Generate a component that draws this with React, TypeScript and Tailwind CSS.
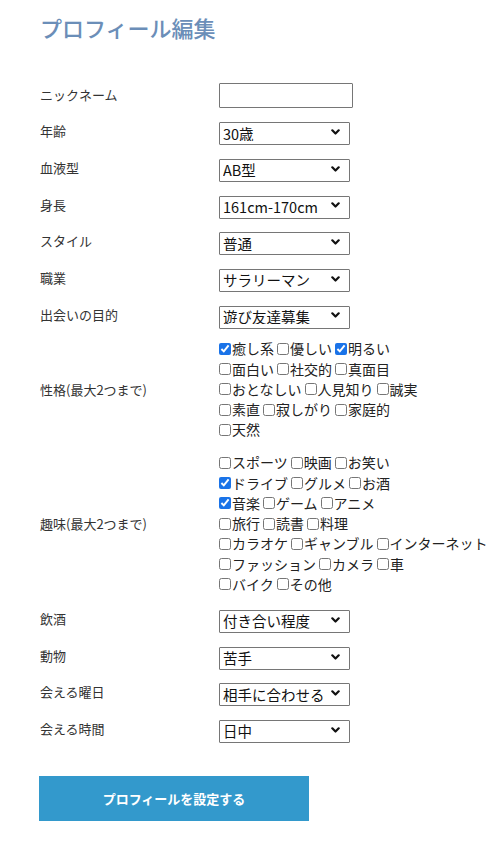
import React from "react";

const font = { fontFamily: '"Noto Sans CJK JP", "Noto Sans", sans-serif' };

function Chevron() {
  return (
    <svg className="pointer-events-none absolute right-[10px] top-1/2 -translate-y-1/2" width="9" height="6" viewBox="0 0 9 6">
      <path d="M1.3 1.3 L4.5 4.5 L7.7 1.3" fill="none" stroke="#111" strokeWidth="2.2" strokeLinecap="round" strokeLinejoin="round" />
    </svg>
  );
}

function Select({ value }: { value: string }) {
  return (
    <div className="relative w-[131px] h-[23px]">
      <select
        defaultValue={value}
        className="appearance-none w-full h-full border border-[#767676] rounded-[1px] bg-white pl-[3px] pr-[18px] text-[14.5px] leading-none text-[#111] outline-none"
        style={font}
      >
        <option value={value}>{value}</option>
      </select>
      <Chevron />
    </div>
  );
}

function Row({ label, children }: { label: string; children: React.ReactNode }) {
  return (
    <div className="grid grid-cols-[179px_1fr] items-center h-[36.7px]">
      <div className="text-[13px] text-[#333] -mt-[2px]">{label}</div>
      <div className="flex items-center">{children}</div>
    </div>
  );
}

type Item = [string, boolean];

function CheckLines({ lines }: { lines: Item[][] }) {
  return (
    <div className="flex flex-col">
      {lines.map((line, i) => (
        <div key={i} className="flex items-center h-[20.25px] text-[14px] text-[#222] whitespace-nowrap">
          {line.map(([t, c], j) => (
            <label key={j} className={"flex items-center " + (j > 0 ? "ml-[3px]" : "")}>
              <input type="checkbox" defaultChecked={c} className="m-0 mr-[1px] w-[12px] h-[12px] accent-[#1a73e8]" />
              <span>{t}</span>
            </label>
          ))}
        </div>
      ))}
    </div>
  );
}

export default function App() {
  const personality: Item[][] = [
    [["癒し系", true], ["優しい", false], ["明るい", true]],
    [["面白い", false], ["社交的", false], ["真面目", false]],
    [["おとなしい", false], ["人見知り", false], ["誠実", false]],
    [["素直", false], ["寂しがり", false], ["家庭的", false]],
    [["天然", false]],
  ];
  const hobby: Item[][] = [
    [["スポーツ", false], ["映画", false], ["お笑い", false]],
    [["ドライブ", true], ["グルメ", false], ["お酒", false]],
    [["音楽", true], ["ゲーム", false], ["アニメ", false]],
    [["旅行", false], ["読書", false], ["料理", false]],
    [["カラオケ", false], ["ギャンブル", false], ["インターネット", false]],
    [["ファッション", false], ["カメラ", false], ["車", false]],
    [["バイク", false], ["その他", false]],
  ];
  return (
    <div className="w-[504px] min-h-[858px] bg-white pl-[40px]" style={font}>
      <div className="pt-[12px]">
        <h1 className="h-[30px] leading-[30px] text-[22px] font-medium text-[#6b8eb8]">プロフィール編集</h1>
      </div>
      <div className="mt-[35px]">
        <Row label="ニックネーム">
          <input type="text" className="w-[134px] h-[25px] border border-[#767676] rounded-[1px] bg-white outline-none" />
        </Row>
        <Row label="年齢"><Select value="30歳" /></Row>
        <Row label="血液型"><Select value="AB型" /></Row>
        <Row label="身長"><Select value="161cm-170cm" /></Row>
        <Row label="スタイル"><Select value="普通" /></Row>
        <Row label="職業"><Select value="サラリーマン" /></Row>
        <Row label="出会いの目的"><Select value="遊び友達募集" /></Row>
        <div className="grid grid-cols-[179px_1fr] items-center pt-[5px]">
          <div className="text-[13px] text-[#333]">性格(最大2つまで)</div>
          <CheckLines lines={personality} />
        </div>
        <div className="grid grid-cols-[179px_1fr] items-center mt-[12.7px]">
          <div className="text-[13px] text-[#333]">趣味(最大2つまで)</div>
          <CheckLines lines={hobby} />
        </div>
        <div className="mt-[7px]">
          <Row label="飲酒"><Select value="付き合い程度" /></Row>
          <Row label="動物"><Select value="苦手" /></Row>
          <Row label="会える曜日"><Select value="相手に合わせる" /></Row>
          <Row label="会える時間"><Select value="日中" /></Row>
        </div>
      </div>
      <button className="mt-[28px] -ml-[1px] w-[270px] h-[45px] bg-[#3399cc] text-white text-[13px] font-bold" style={font}>
        プロフィールを設定する
      </button>
    </div>
  );
}
